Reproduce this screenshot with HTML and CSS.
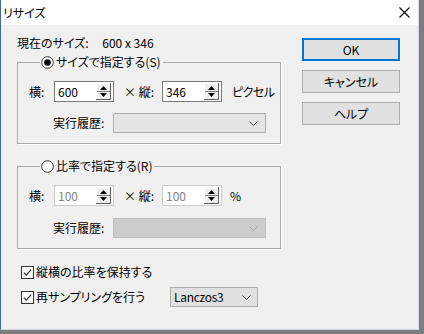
FILE: index.html
```html
<!DOCTYPE html>
<html lang="ja">
<head>
<meta charset="utf-8">
<link rel="stylesheet" href="styles.css">
</head>
<body>
<div class="window">
  <div class="titlebar">
    <span class="title">リサイズ</span>
    <svg class="close" width="11" height="11" viewBox="0 0 11 11"><path d="M0.5 0.5L10.5 10.5M10.5 0.5L0.5 10.5" stroke="#000" stroke-width="1.1" fill="none"/></svg>
  </div>
  <div class="client">
    <div class="main">
      <div class="current">現在のサイズ: <span class="cur-val">600 x 346</span></div>

      <fieldset class="group">
        <legend><svg class="radio" width="13" height="13" viewBox="0 0 13 13"><circle cx="6.5" cy="6.5" r="5.8" fill="#fff" stroke="#333" stroke-width="1"/><circle cx="6.5" cy="6.5" r="3.3" fill="#000"/></svg>サイズで指定する(S)</legend>
        <div class="row dims">
          <span class="lbl-w">横:</span>
          <div class="spin"><span>600</span><svg class="spinbtn" width="15" height="17" viewBox="0 0 15 17"><rect x="0" y="0" width="15" height="17" fill="#f0f0f0"/><path d="M0.5 16V0.5H14" stroke="#fff" fill="none"/><path d="M14.5 0V16.5H0" stroke="#5a5a5a" fill="none"/><path d="M1 8.5H14" stroke="#7a7a7a"/><path d="M4 7L11 7L7.5 3Z" fill="#000"/><path d="M4 10L11 10L7.5 14Z" fill="#000"/></svg></div>
          <span class="times">× 縦:</span>
          <div class="spin"><span>346</span><svg class="spinbtn" width="15" height="17" viewBox="0 0 15 17"><rect x="0" y="0" width="15" height="17" fill="#f0f0f0"/><path d="M0.5 16V0.5H14" stroke="#fff" fill="none"/><path d="M14.5 0V16.5H0" stroke="#5a5a5a" fill="none"/><path d="M1 8.5H14" stroke="#7a7a7a"/><path d="M4 7L11 7L7.5 3Z" fill="#000"/><path d="M4 10L11 10L7.5 14Z" fill="#000"/></svg></div>
          <span class="unit">ピクセル</span>
        </div>
        <div class="row hist">
          <span class="lbl-h">実行履歴:</span>
          <div class="combo"><svg class="chev" width="9" height="5" viewBox="0 0 9 5"><path d="M0.5 0.5L4.5 4.5L8.5 0.5" stroke="#444" fill="none"/></svg></div>
        </div>
      </fieldset>

      <fieldset class="group group2">
        <legend><svg class="radio" width="13" height="13" viewBox="0 0 13 13"><circle cx="6.5" cy="6.5" r="5.8" fill="#fff" stroke="#333" stroke-width="1"/></svg>比率で指定する(R)</legend>
        <div class="row dims">
          <span class="lbl-w">横:</span>
          <div class="spin disabled"><span>100</span><svg class="spinbtn" width="15" height="17" viewBox="0 0 15 17"><rect x="0" y="0" width="15" height="17" fill="#f0f0f0"/><path d="M0.5 16V0.5H14" stroke="#fff" fill="none"/><path d="M14.5 0V16.5H0" stroke="#5a5a5a" fill="none"/><path d="M1 8.5H14" stroke="#7a7a7a"/><path d="M4 7L11 7L7.5 3Z" fill="#000"/><path d="M4 10L11 10L7.5 14Z" fill="#000"/></svg></div>
          <span class="times">× 縦:</span>
          <div class="spin disabled"><span>100</span><svg class="spinbtn" width="15" height="17" viewBox="0 0 15 17"><rect x="0" y="0" width="15" height="17" fill="#f0f0f0"/><path d="M0.5 16V0.5H14" stroke="#fff" fill="none"/><path d="M14.5 0V16.5H0" stroke="#5a5a5a" fill="none"/><path d="M1 8.5H14" stroke="#7a7a7a"/><path d="M4 7L11 7L7.5 3Z" fill="#000"/><path d="M4 10L11 10L7.5 14Z" fill="#000"/></svg></div>
          <span class="unit pct">%</span>
        </div>
        <div class="row hist hist2">
          <span class="lbl-h">実行履歴:</span>
          <div class="combo disabled"><svg class="chev" width="9" height="5" viewBox="0 0 9 5"><path d="M0.5 0.5L4.5 4.5L8.5 0.5" stroke="#a6a6a6" fill="none"/></svg></div>
        </div>
      </fieldset>

      <div class="check-row first">
        <svg class="check" width="13" height="13" viewBox="0 0 13 13"><rect x="0.5" y="0.5" width="12" height="12" fill="#fff" stroke="#333"/><path d="M2.8 6.6L5.3 9.1L10.2 3.6" stroke="#333" stroke-width="1.3" fill="none"/></svg>
        <span class="check-text">縦横の比率を保持する</span>
      </div>
      <div class="check-row second">
        <svg class="check" width="13" height="13" viewBox="0 0 13 13"><rect x="0.5" y="0.5" width="12" height="12" fill="#fff" stroke="#333"/><path d="M2.8 6.6L5.3 9.1L10.2 3.6" stroke="#333" stroke-width="1.3" fill="none"/></svg>
        <span class="check-text">再サンプリングを行う</span>
        <div class="combo small"><span class="lz">Lanczos3</span><svg class="chev" width="9" height="5" viewBox="0 0 9 5"><path d="M0.5 0.5L4.5 4.5L8.5 0.5" stroke="#444" fill="none"/></svg></div>
      </div>
    </div>

    <div class="buttons">
      <div class="btn default">OK</div>
      <div class="btn">キャンセル</div>
      <div class="btn">ヘルプ</div>
    </div>
  </div>
</div>
</body>
</html>
```
FILE: styles.css
```css
* { box-sizing: border-box; }
html, body { margin: 0; }
body {
  width: 424px;
  height: 334px;
  overflow: hidden;
  background: #7d7d7d;
  font-family: "Noto Sans CJK JP", sans-serif;
  font-size: 12px;
  line-height: 16px;
  color: #000;
  font-feature-settings: "palt";
}
.window {
  width: 419px;
  height: 330px;
  background: #f0f0f0;
  border-left: 1px solid #3d6b9b;
  border-right: 1px solid #c6dbef;
  border-bottom: 1px solid #c6dbef;
  display: flex;
  flex-direction: column;
}
.titlebar {
  height: 25px;
  flex: none;
  background: #fff;
  display: flex;
  align-items: center;
  justify-content: space-between;
  padding: 0 8px 0 2px;
}
.close { display: block; }
.client {
  flex: 1;
  display: flex;
  padding: 10px 0 0 16px;
}
.main {
  width: 264px;
  display: flex;
  flex-direction: column;
}
.current { height: 16px; }
.cur-val { margin-left: 11px; }
.group {
  margin: 3px 0 0;
  padding: 11px 0 10px 11px;
  border: 1px solid #a9a9a9;
  box-shadow: 1px 1px 0 #fff;
  min-width: 0;
}
.group2 { margin-top: 14px; }
.group legend {
  margin-left: 11px;
  padding: 0 2px 0 1px;
  height: 16px;
  line-height: 16px;
}
.radio {
  vertical-align: -2px;
  margin-right: 2px;
}
.row { display: flex; align-items: center; }
.dims { height: 21px; }
.lbl-w { width: 25px; flex: none; }
.spin {
  width: 60px;
  height: 21px;
  flex: none;
  border: 1px solid #7a7a7a;
  background: #fff;
  display: flex;
  align-items: center;
  justify-content: space-between;
  padding: 0 2px 0 3px;
}
.spin.disabled { border-color: #cccccc; color: #838383; }
.spinbtn { display: block; }
.times { margin-left: 10px; width: 38px; flex: none; }
.unit { margin-left: 10px; letter-spacing: -0.5px; }
.pct { margin-left: 8px; }
.hist { margin-top: 11px; height: 20px; }
.hist2 { margin-top: 12px; }
.lbl-h { margin-left: 24px; width: 60px; flex: none; }
.combo {
  width: 153px;
  height: 20px;
  border: 1px solid #adadad;
  background: #e5e5e5;
  display: flex;
  align-items: center;
  justify-content: flex-end;
  padding: 0 7px 0 4px;
}
.combo.disabled { background: #cccccc; border-color: #bfbfbf; }
.chev { display: block; }
.check-row { display: flex; align-items: center; height: 16px; }
.check-row.first { margin-top: 15px; }
.check-row.second { margin-top: 7px; height: 20px; }
.check { margin-left: 4px; display: block; flex: none; }
.check-text { margin-left: 2px; }
.second .check-text { width: 134px; flex: none; }
.combo.small {
  width: 88px;
  justify-content: space-between;
  background: #e1e1e1;
  padding: 0 6px 0 3px;
}
.lz { letter-spacing: -0.3px; }
.buttons {
  margin-left: 21px;
  padding-top: 3px;
  display: flex;
  flex-direction: column;
  gap: 9px;
}
.btn {
  width: 98px;
  height: 23px;
  border: 1px solid #adadad;
  background: #e1e1e1;
  display: flex;
  align-items: center;
  justify-content: center;
}
.btn.default { border: 2px solid #0078d7; }
```
